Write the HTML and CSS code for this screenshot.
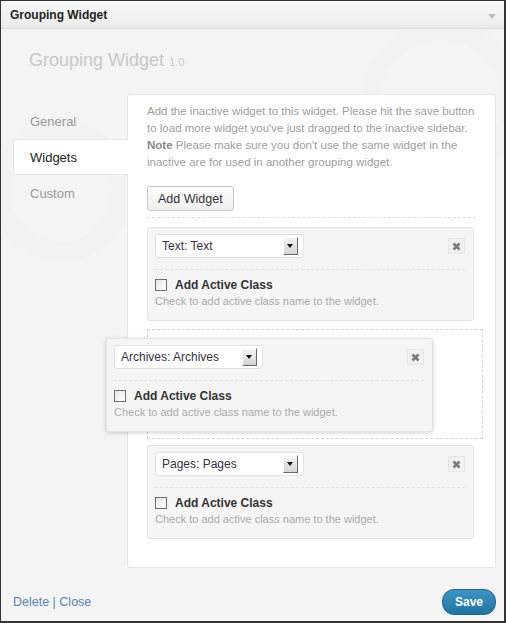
FILE: index.html
```html
<!DOCTYPE html>
<html>
  <head>
    <meta charset="utf-8">
    <title>Grouping Widget</title>
    <link rel="stylesheet" href="styles.css">
  </head>
  <body>
    <div class="widget">
      <div class="widget-top">
        <h3>Grouping Widget</h3>
        <span class="toggle"></span>
      </div>

      <div class="widget-inside">
        <h2 class="plugin-title">Grouping Widget <small>1.0</small></h2>

        <div class="tabs-wrap">
          <ul class="tabs">
            <li>General</li>
            <li class="active">Widgets</li>
            <li>Custom</li>
          </ul>

          <div class="tab-panel">
            <p class="desc">
              Add the inactive widget to this widget. Please hit the save button
              to load more widget you've just dragged to the inactive sidebar.
              <b>Note</b> Please make sure you don't use the same widget in the
              inactive are for used in another grouping widget.
            </p>
            <button class="btn">Add Widget</button>

            <div class="widget-list">
              <div class="item">
                <div class="item-head">
                  <div class="select">Text: Text<span class="arrow"></span></div>
                  <span class="remove">
                    <svg width="9" height="9" viewBox="0 0 9 9"><path d="M1.5 1.5l6 6M7.5 1.5l-6 6" stroke="#7a7a7a" stroke-width="2.6"/></svg>
                  </span>
                </div>
                <label class="check"><span class="box"></span>Add Active Class</label>
                <p class="help">Check to add active class name to the widget.</p>
              </div>

              <div class="placeholder">
                <div class="item dragging">
                  <div class="item-head">
                    <div class="select">Archives: Archives<span class="arrow"></span></div>
                    <span class="remove">
                      <svg width="9" height="9" viewBox="0 0 9 9"><path d="M1.5 1.5l6 6M7.5 1.5l-6 6" stroke="#7a7a7a" stroke-width="2.6"/></svg>
                    </span>
                  </div>
                  <label class="check"><span class="box"></span>Add Active Class</label>
                  <p class="help">Check to add active class name to the widget.</p>
                </div>
              </div>

              <div class="item">
                <div class="item-head">
                  <div class="select">Pages: Pages<span class="arrow"></span></div>
                  <span class="remove">
                    <svg width="9" height="9" viewBox="0 0 9 9"><path d="M1.5 1.5l6 6M7.5 1.5l-6 6" stroke="#7a7a7a" stroke-width="2.6"/></svg>
                  </span>
                </div>
                <label class="check"><span class="box"></span>Add Active Class</label>
                <p class="help">Check to add active class name to the widget.</p>
              </div>
            </div>
          </div>
        </div>

        <div class="actions">
          <div class="links"><a href="#">Delete</a> | <a href="#">Close</a></div>
          <button class="btn-save">Save</button>
        </div>
      </div>
    </div>
  </body>
</html>
```

FILE: styles.css
```css
html, body {
  margin: 0;
  padding: 0;
}

body {
  font-family: "Liberation Sans", Arial, sans-serif;
  color: #333;
}

.widget {
  box-sizing: border-box;
  width: 506px;
  height: 623px;
  border: 1px solid #333;
  border-right-width: 2px;
  border-bottom-width: 2px;
  background: #f4f4f4;
  background-image:
    radial-gradient(circle at 440px 100px, rgba(0,0,0,0) 60px, rgba(0,0,0,.008) 61px, rgba(0,0,0,.008) 80px, rgba(0,0,0,0) 81px),
    radial-gradient(circle at 60px 190px, rgba(0,0,0,0) 50px, rgba(0,0,0,.008) 51px, rgba(0,0,0,.008) 70px, rgba(0,0,0,0) 71px);
}

.widget-top {
  display: flex;
  justify-content: space-between;
  align-items: center;
  height: 27px;
  padding: 0 8px 0 9px;
  background: linear-gradient(#f9f9f9, #ebebeb);
  border-bottom: 1px solid #dedede;
}

.widget-top h3 {
  margin: 0;
  font-size: 12px;
  font-weight: bold;
  color: #222;
}

.toggle {
  width: 0;
  height: 0;
  margin-top: 3px;
  border-left: 4px solid transparent;
  border-right: 4px solid transparent;
  border-top: 5px solid #bbb;
}

.widget-inside {
  padding: 0 8px 0 12px;
}

.plugin-title {
  margin: 0;
  padding: 20px 0 0 16px;
  height: 22px;
  line-height: 22px;
  font-size: 18px;
  font-weight: normal;
  color: #c8c8c8;
}

.plugin-title small {
  font-size: 11px;
  color: #c8c8c8;
}

.tabs-wrap {
  display: flex;
  align-items: flex-start;
  margin-top: 23px;
}

.tabs {
  width: 115px;
  margin: 9px -1px 0 0;
  padding: 0;
  list-style: none;
  position: relative;
  z-index: 1;
}

.tabs li {
  height: 36px;
  line-height: 36px;
  padding-left: 16px;
  font-size: 13px;
  color: #999;
  border: 1px solid transparent;
  border-right: 0;
  box-sizing: border-box;
}

.tabs li.active {
  background: #fff;
  color: #222;
  border-color: #e6e6e6;
  border-radius: 3px 0 0 3px;
}

.tab-panel {
  flex: 1;
  min-height: 436px;
  padding: 8px 9px 20px 19px;
  background: #fff;
  border: 1px solid #e6e6e6;
  border-radius: 3px;
}

.desc {
  margin: 0;
  width: 330px;
  font-size: 11.5px;
  line-height: 17px;
  color: #a0a0a0;
}

.desc b {
  color: #888;
}

.btn {
  margin-top: 15px;
  height: 25px;
  padding: 0 10px;
  font-family: inherit;
  font-size: 12.5px;
  color: #333;
  background: linear-gradient(#fefefe, #eeeeee);
  border: 1px solid #c8c8c8;
  border-radius: 3px;
}

.widget-list {
  width: 329px;
  margin-top: 6px;
  padding-top: 9px;
  border-top: 1px dashed #dedede;
}

.item {
  box-sizing: border-box;
  width: 327px;
  height: 94px;
  margin-bottom: 8px;
  padding: 6px 8px 0 7px;
  background: #f5f5f5;
  border: 1px solid #e4e4e4;
  border-radius: 3px;
}

.item-head {
  display: flex;
  justify-content: space-between;
  align-items: flex-start;
  padding-bottom: 11px;
  border-bottom: 1px dashed #e2e2e2;
}

.select {
  display: flex;
  justify-content: space-between;
  align-items: center;
  box-sizing: border-box;
  width: 149px;
  height: 24px;
  padding: 0 5px 0 6px;
  font-size: 12px;
  color: #3b2f45;
  background: #fff;
  border: 1px solid #e2e2e2;
  border-radius: 3px;
}

.arrow {
  position: relative;
  box-sizing: border-box;
  width: 15px;
  height: 18px;
  background: linear-gradient(#f4f4f4, #d4d4d4);
  border: 1px solid #fff;
  border-right-color: #6a6a6a;
  border-bottom-color: #6a6a6a;
}

.arrow::after {
  content: "";
  position: absolute;
  left: 3px;
  top: 6px;
  border-left: 3.5px solid transparent;
  border-right: 3.5px solid transparent;
  border-top: 4px solid #111;
}

.remove {
  display: flex;
  justify-content: center;
  align-items: center;
  width: 15px;
  height: 14px;
  margin-top: 4px;
  background: #f0f0f0;
  border: 1px solid #e6e6e6;
}

.check {
  display: flex;
  align-items: center;
  margin-top: 7px;
  height: 16px;
  font-size: 12px;
  font-weight: bold;
  color: #333;
}

.box {
  box-sizing: border-box;
  width: 12px;
  height: 12px;
  margin-right: 8px;
  background: linear-gradient(135deg, #e6e6e6, #fff);
  border: 1px solid #6f6f6f;
}

.help {
  margin: 2px 0 0;
  font-size: 11px;
  line-height: 13px;
  color: #aaa;
}

.placeholder {
  position: relative;
  box-sizing: border-box;
  width: 336px;
  height: 110px;
  margin-bottom: 6px;
  border: 1px dashed #d4d4d4;
}

.item.dragging {
  position: absolute;
  left: -42px;
  top: 8px;
  margin: 0;
  box-shadow: 0 1px 4px rgba(0, 0, 0, .18);
}

.actions {
  display: flex;
  justify-content: space-between;
  align-items: center;
  margin-top: 21px;
  font-size: 12.5px;
  color: #5a84ad;
}

.actions a {
  color: #5a84ad;
  text-decoration: none;
}

.btn-save {
  width: 54px;
  height: 26px;
  font-family: inherit;
  font-size: 12px;
  font-weight: bold;
  color: #fff;
  background: linear-gradient(#3f94c4, #21749f);
  border: 1px solid #1d6690;
  border-radius: 12px;
}
```
